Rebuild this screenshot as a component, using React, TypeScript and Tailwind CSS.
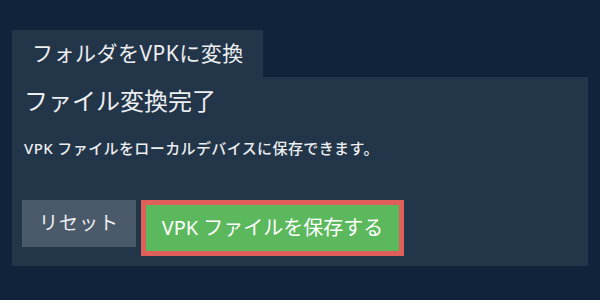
export default function App() {
  return (
    <div
      className="w-[600px] h-[300px] bg-[#11233a] pt-[30px] px-[12px] text-[#eceef0]"
      style={{ fontFamily: '"Noto Sans", "Noto Sans CJK JP", sans-serif' }}
    >
      {/* Tab */}
      <div className="flex">
        <div className="h-[47px] w-[251px] bg-[#223549] pl-[20px] flex items-center text-[21px] tracking-[0.5px]">
          フォルダをVPKに変換
        </div>
      </div>

      {/* Panel */}
      <div className="bg-[#223549] pl-[10px] pr-[10px] pt-[8px] pb-[10px]">
        <h2 className="pl-[2px] text-[24px] leading-[32px]">ファイル変換完了</h2>
        <p className="pl-[2px] mt-[21px] text-[15px] leading-[20px] font-medium tracking-[0.4px]">
          VPK ファイルをローカルデバイスに保存できます。
        </p>
        <div className="mt-[42px] flex items-start gap-[5px]">
          <button className="h-[47px] w-[114px] bg-[#4b5a6b] text-[19px] tracking-[1px] flex items-center justify-center">
            リセット
          </button>
          <button className="h-[56px] w-[263px] bg-[#5cb85c] border-[5px] border-[#df5f5a] text-[20px] text-white flex items-center justify-center">
            VPK ファイルを保存する
          </button>
        </div>
      </div>
    </div>
  );
}
